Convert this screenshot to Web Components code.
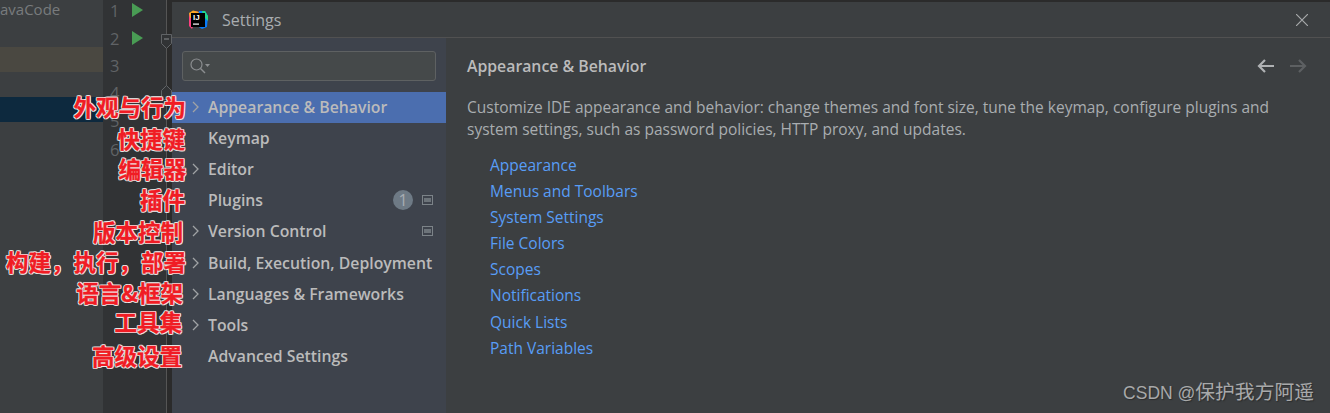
<!DOCTYPE html>
<html lang="en">
<head>
<meta charset="utf-8">
<title>Settings</title>
<style>
  html, body { margin: 0; height: 100%; background: #3c3f41; overflow: hidden; }
  body { position: relative; display: flex; width: 1330px; height: 413px; font-family: "Open Sans", "Noto Sans CJK SC", sans-serif; color: #bbb; }
</style>
</head>
<body>
  <back-editor></back-editor>
  <settings-dialog>
    <settings-nav slot="nav">
      <nav-item arrow selected>Appearance &amp; Behavior</nav-item>
      <nav-item>Keymap</nav-item>
      <nav-item arrow>Editor</nav-item>
      <nav-item badge="1" etched>Plugins</nav-item>
      <nav-item arrow etched>Version Control</nav-item>
      <nav-item arrow>Build, Execution, Deployment</nav-item>
      <nav-item arrow>Languages &amp; Frameworks</nav-item>
      <nav-item arrow>Tools</nav-item>
      <nav-item>Advanced Settings</nav-item>
    </settings-nav>
    <settings-page slot="page" heading="Appearance &amp; Behavior">
      <span slot="desc">Customize IDE appearance and behavior: change themes and font size, tune the keymap, configure plugins and<br>system settings, such as password policies, HTTP proxy, and updates.</span>
      <page-link>Appearance</page-link>
      <page-link>Menus and Toolbars</page-link>
      <page-link>System Settings</page-link>
      <page-link>File Colors</page-link>
      <page-link>Scopes</page-link>
      <page-link>Notifications</page-link>
      <page-link>Quick Lists</page-link>
      <page-link>Path Variables</page-link>
    </settings-page>
  </settings-dialog>

  <red-note right="186" top="91">外观与行为</red-note>
  <red-note right="185" top="123">快捷键</red-note>
  <red-note right="186" top="153">编辑器</red-note>
  <red-note right="185" top="184">插件</red-note>
  <red-note right="183" top="216">版本控制</red-note>
  <red-note right="186" top="246">构建，执行，部署</red-note>
  <red-note right="183" top="277">语言&amp;框架</red-note>
  <red-note right="182" top="306">工具集</red-note>
  <red-note right="182" top="340">高级设置</red-note>

  <water-mark>CSDN @<span style="font-size:19.800px">保护我方阿遥</span></water-mark>

<script>
// background editor peeking out behind the dialog
class BackEditor extends HTMLElement {
  constructor() {
    super();
    const gutter = [1, 2, 3, 4, 5, 6].map((n, i) => `
      <div class="ln" style="height:${[28, 27, 27, 28, 29, 30][i]}px">${n}
        ${i < 2 ? '<svg class="run" width="11" height="14" viewBox="0 0 11 14"><path d="M0 0l11 7-11 7z" fill="#499c54"/></svg>' : ''}
      </div>`).join('');
    this.attachShadow({ mode: 'open' }).innerHTML = `
      <style>
        :host { display: flex; flex: none; width: 172px; height: 100%; font-family: "Open Sans", sans-serif; overflow: hidden; }
        .tree { width: 103px; background: #3c3f41; display: flex; flex-direction: column; }
        .name { height: 47px; font-size: 15px; line-height: 19px; color: #787b7d; }
        .warn { height: 25px; background: #4a4841; }
        .gap { height: 25px; }
        .sel { height: 25px; background: #0d293e; }
        .wrap { position: relative; flex: none; width: 64px; background: #313335; }
        .ln { font-size: 16.500px; line-height: 22px; color: #606366; padding-left: 7px; position: relative; box-sizing: border-box; }
        .run { position: absolute; left: 29px; top: 3px; }
        .edge { position: absolute; right: 0; top: 0; bottom: 0; width: 1px; background: #555; }
        .mark { position: absolute; left: 58px; }
        .fold { flex: none; width: 5px; background: #2b2b2b; }
      </style>
      <div class="tree">
        <div class="name">avaCode</div>
        <div class="warn"></div>
        <div class="gap"></div>
        <div class="sel"></div>
      </div>
      <div class="wrap">
        <div class="ln-list">${gutter}</div>
        <div class="edge"></div>
        <svg class="mark" style="top:34px" width="11" height="15" viewBox="0 0 11 15"><path d="M.5.500h10v9l-5 5-5-5z" fill="#313335" stroke="#606366"/><path d="M3 5h5" stroke="#8a8d8f"/></svg>
        <svg class="mark" style="top:85px" width="11" height="15" viewBox="0 0 11 15"><path d="M.5 5.500l5-5 5 5v9H.5z" fill="#313335" stroke="#606366"/></svg>
      </div>
      <div class="fold"></div>`;
  }
}
customElements.define('back-editor', BackEditor);

class SettingsDialog extends HTMLElement {
  constructor() {
    super();
    this.attachShadow({ mode: 'open' }).innerHTML = `
      <style>
        :host { display: flex; flex-direction: column; flex: 1; min-width: 0; height: 100%; background: #3c3f41; border-top: 2px solid #2b2b2b; box-sizing: border-box; position: relative; }
        header { flex: none; height: 35px; border-bottom: 1px solid #515151; display: flex; align-items: center; padding: 0 22px 0 16px; box-sizing: content-box; }
        .logo { position: relative; flex: none; width: 20px; height: 20px; margin-right: 14px; }
        .logo svg { position: absolute; inset: 0; }
        .logo b { position: absolute; left: 5px; top: 3px; font: 700 8px/9px "Liberation Sans", sans-serif; color: #fff; }
        h1 { flex: 1; margin: 0; font: 400 16px/20px "Open Sans", sans-serif; color: #a9adb0; }
        .body { flex: 1; display: flex; min-height: 0; }
        ::slotted([slot=nav]) { flex: none; width: 274px; }
        ::slotted([slot=page]) { flex: 1; min-width: 0; }
      </style>
      <header>
        <span class="logo">
          <svg width="20" height="20" viewBox="0 0 20 20">
            <path d="M1 4l5-3 5 1-3 8-4 9-3-3z" fill="#fc3f7f"/>
            <path d="M1 3l4-2.500 6 1.500-3 5-6 1z" fill="#f9a825"/>
            <path d="M11 1h6l3 5-1 11-5 2-5-3z" fill="#087cfa"/>
            <path d="M14 1h3l3 5v5l-5-5z" fill="#21d789"/>
            <rect x="3" y="3" width="14" height="14" fill="#000"/>
            <rect x="5" y="13.500" width="6" height="1.200" fill="#fff"/>
          </svg>
          <b>IJ</b>
        </span>
        <h1>Settings</h1>
        <svg width="12" height="12" viewBox="0 0 12 12"><path d="M0 0l12 12M12 0L0 12" stroke="#a7a9ab" stroke-width="1.200" fill="none"/></svg>
      </header>
      <div class="body">
        <slot name="nav"></slot>
        <slot name="page"></slot>
      </div>`;
  }
}
customElements.define('settings-dialog', SettingsDialog);

class SettingsNav extends HTMLElement {
  constructor() {
    super();
    this.attachShadow({ mode: 'open' }).innerHTML = `
      <style>
        :host { display: block; background: #3e434c; box-sizing: border-box; padding-top: 13px; }
        .search { height: 30px; margin: 0 10px 11px; box-sizing: border-box; background: #45494a; border: 1px solid #5e6162; border-radius: 3px; display: flex; align-items: center; padding-left: 6px; }
      </style>
      <div class="search">
        <svg width="22" height="18" viewBox="0 0 22 18">
          <circle cx="7.500" cy="7.500" r="5.500" fill="none" stroke="#8b8e90" stroke-width="1.200"/>
          <path d="M11.500 11.500l4.500 4.500" stroke="#8b8e90" stroke-width="1.400"/>
          <path d="M16 7h5l-2.500 3z" fill="#8b8e90"/>
        </svg>
      </div>
      <slot></slot>`;
  }
}
customElements.define('settings-nav', SettingsNav);

class NavItem extends HTMLElement {
  constructor() {
    super();
    this.attachShadow({ mode: 'open' });
  }
  connectedCallback() {
    const badge = this.getAttribute('badge');
    this.shadowRoot.innerHTML = `
      <style>
        :host { display: flex; align-items: center; height: 31.200px; box-sizing: border-box; font: 600 15.800px/20px "Open Sans", sans-serif; color: #bbb; padding: 0 12px 2px 20px; white-space: nowrap; }
        :host([selected]) { background: #4b6eaf; }
        .arrow { flex: none; width: 16px; display: flex; }
        .label { flex: 1; }
        .badge { width: 20px; height: 20px; border-radius: 50%; background: #6e7a85; color: #a6adb3; font: 400 16px/20px "Open Sans", sans-serif; text-align: center; margin-right: 9px; }
        .etched { flex: none; }
      </style>
      <span class="arrow">${this.hasAttribute('arrow') ? '<svg width="8" height="12" viewBox="0 0 8 12"><path d="M1 1l5 5-5 5" fill="none" stroke="#a0a3a5" stroke-width="1.300"/></svg>' : ''}</span>
      <span class="label"><slot></slot></span>
      ${badge ? `<span class="badge">${badge}</span>` : ''}
      ${this.hasAttribute('etched') ? '<svg class="etched" width="12" height="10" viewBox="0 0 12 10"><rect x="0.500" y="0.500" width="10" height="9" fill="none" stroke="#7c8388"/><rect x="2" y="3" width="7" height="4" fill="#6d747a"/></svg>' : ''}`;
  }
}
customElements.define('nav-item', NavItem);

class SettingsPage extends HTMLElement {
  constructor() {
    super();
    this.attachShadow({ mode: 'open' });
  }
  connectedCallback() {
    this.shadowRoot.innerHTML = `
      <style>
        :host { display: block; padding: 17px 23px 0 21px; font: 400 15.500px/22px "Open Sans", sans-serif; color: #a9adb0; }
        .head { display: flex; align-items: center; justify-content: space-between; height: 22px; margin-bottom: 19px; }
        h2 { margin: 0; font: 600 15.800px/22px "Open Sans", sans-serif; color: #bbb; }
        .nav { display: flex; gap: 16px; }
        p { margin: 0 0 12px; line-height: 22px; white-space: nowrap; }
        .links { display: flex; flex-direction: column; padding-left: 23px; }
      </style>
      <div class="head">
        <h2>${this.getAttribute('heading').replace('&', '&amp;')}</h2>
        <span class="nav">
          <svg width="17" height="14" viewBox="0 0 17 14"><path d="M8 1L2 7l6 6M2 7h15" fill="none" stroke="#afb1b3" stroke-width="2.200"/></svg>
          <svg width="17" height="14" viewBox="0 0 17 14"><path d="M9 1l6 6-6 6M15 7H0" fill="none" stroke="#5d6062" stroke-width="2.200"/></svg>
        </span>
      </div>
      <p><slot name="desc"></slot></p>
      <div class="links"><slot></slot></div>`;
  }
}
customElements.define('settings-page', SettingsPage);

class PageLink extends HTMLElement {
  constructor() {
    super();
    this.attachShadow({ mode: 'open' }).innerHTML = `
      <style>
        :host { display: block; height: 26.100px; font: 400 15.500px/26px "Open Sans", sans-serif; color: #589df6; }
      </style>
      <slot></slot>`;
  }
}
customElements.define('page-link', PageLink);

// hand-drawn red captions pasted over the screenshot
class RedNote extends HTMLElement {
  constructor() {
    super();
    this.attachShadow({ mode: 'open' }).innerHTML = `
      <style>
        :host { position: absolute; display: block; white-space: nowrap; font: 700 22.500px/30px "Noto Sans CJK SC", sans-serif; color: #f01c24;
          -webkit-text-stroke: .4px #f01c24;
          text-shadow: 1px 0 #eee, -1px 0 #eee, 0 1px #eee, 0 -1px #eee, 1px 1px #ccc, -1px -1px #ccc, 1px -1px #ccc, -1px 1px #ccc; }
      </style>
      <slot></slot>`;
  }
  connectedCallback() {
    this.style.right = (1330 - Number(this.getAttribute('right'))) + 'px';
    this.style.top = this.getAttribute('top') + 'px';
  }
}
customElements.define('red-note', RedNote);

class WaterMark extends HTMLElement {
  constructor() {
    super();
    this.attachShadow({ mode: 'open' }).innerHTML = `
      <style>
        :host { position: absolute; right: 16px; bottom: 8px; font: 400 17.500px/24px "Liberation Sans", "Noto Sans CJK SC", sans-serif; color: #a8a9aa; text-shadow: 1px 1px 1px #2b2d2e; white-space: nowrap; }
      </style>
      <slot></slot>`;
  }
}
customElements.define('water-mark', WaterMark);
</script>
</body>
</html>
